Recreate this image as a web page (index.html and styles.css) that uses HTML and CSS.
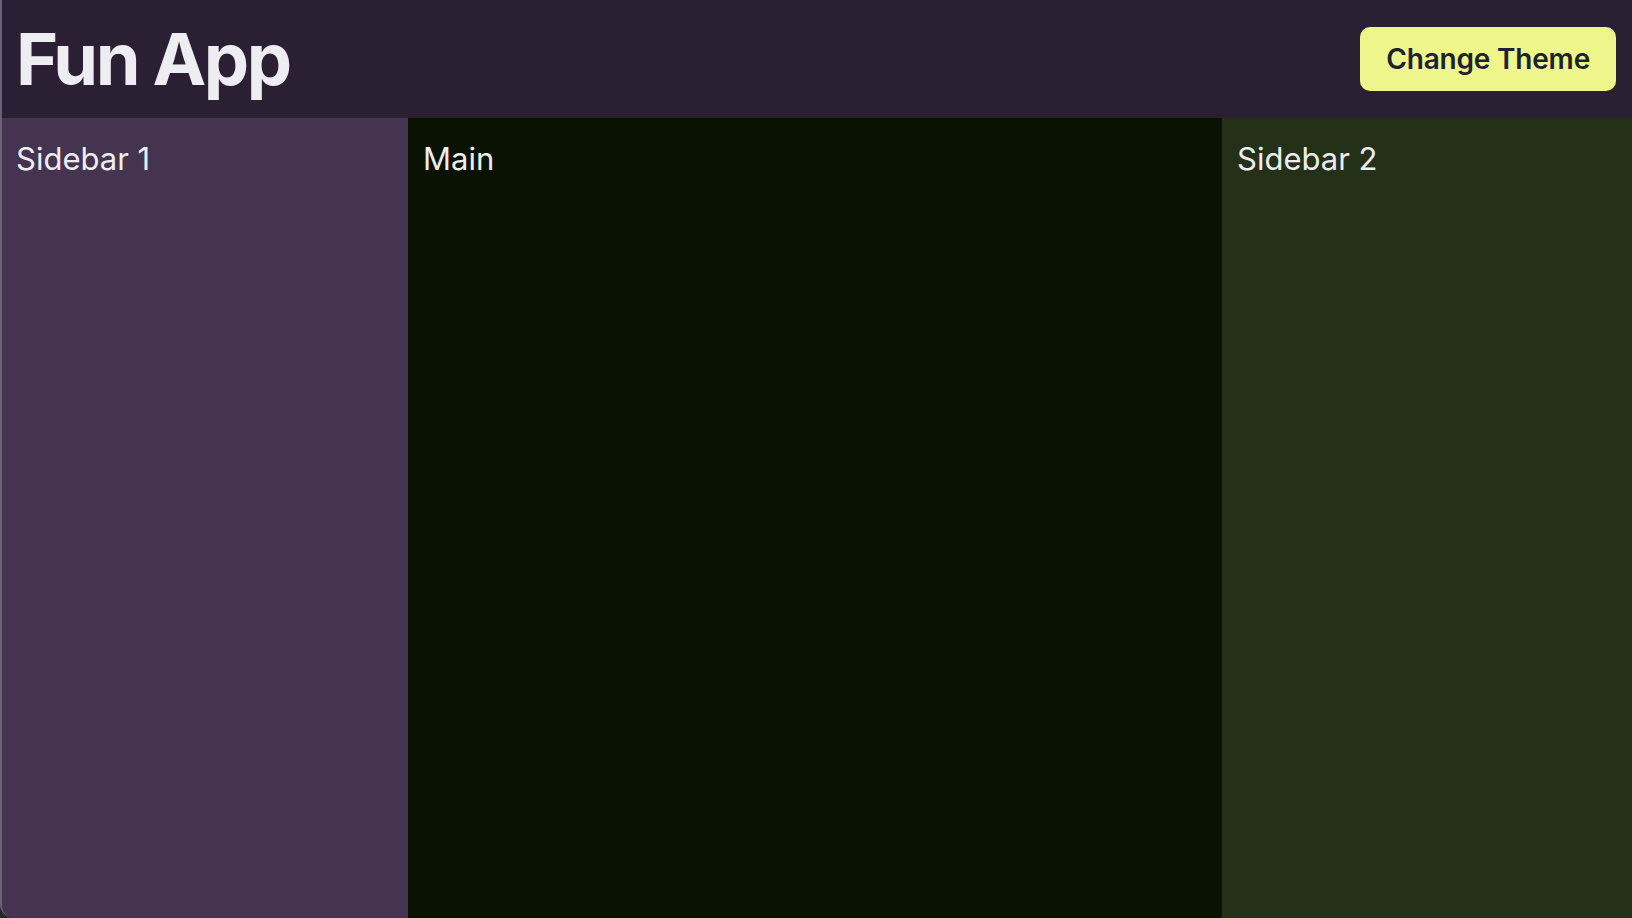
FILE: index.html
```html
<!DOCTYPE html>
<html lang="en">
<head>
  <meta charset="UTF-8">
  <meta name="viewport" content="width=device-width, initial-scale=1.0">
  <title>Fun App</title>
  <link rel="stylesheet" href="styles.css">
</head>
<body>
  <div class="app">
    <header class="app-header">
      <h1>Fun App</h1>
      <button id="theme-btn" class="theme-btn">Change Theme</button>
    </header>
    <div class="layout">
      <aside class="panel sidebar-1">Sidebar 1</aside>
      <main class="panel main">Main</main>
      <aside class="panel sidebar-2">Sidebar 2</aside>
    </div>
  </div>
</body>
</html>
```

FILE: styles.css
```css
html, body {
  height: 100%;
}
body {
  margin: 0;
  padding: 0;
  background-color: #25282c;
  font-family: Inter, "Noto Sans", sans-serif;
  color: #eeedf1;
}
.app {
  height: 100%;
  display: flex;
  flex-direction: column;
  border-left: 2px solid #6e6078;
  border-bottom-left-radius: 14px;
  overflow: hidden;
  box-sizing: border-box;
}
.app-header {
  height: 118px;
  flex-shrink: 0;
  display: flex;
  justify-content: space-between;
  align-items: center;
  padding: 0 16px 0 14px;
  background-color: #2b1f33;
}
.app-header h1 {
  margin: 0;
  font-size: 72px;
  line-height: 1;
  font-weight: 700;
  letter-spacing: -2.5px;
}
.theme-btn {
  height: 64px;
  padding: 0 26px;
  background-color: #eef58a;
  color: #1c2330;
  border: none;
  border-radius: 10px;
  font-family: inherit;
  font-size: 28px;
  font-weight: 600;
  letter-spacing: -0.2px;
  cursor: pointer;
}
.layout {
  flex: 1;
  display: grid;
  grid-template-columns: 406px 814px 1fr;
}
.panel {
  padding: 23px 15px;
  font-size: 31px;
  line-height: 36px;
}
.sidebar-1 {
  background-color: #44344f;
  padding-left: 14px;
}
.main {
  background-color: #0a1302;
}
.sidebar-2 {
  background-color: #243118;
}
```
